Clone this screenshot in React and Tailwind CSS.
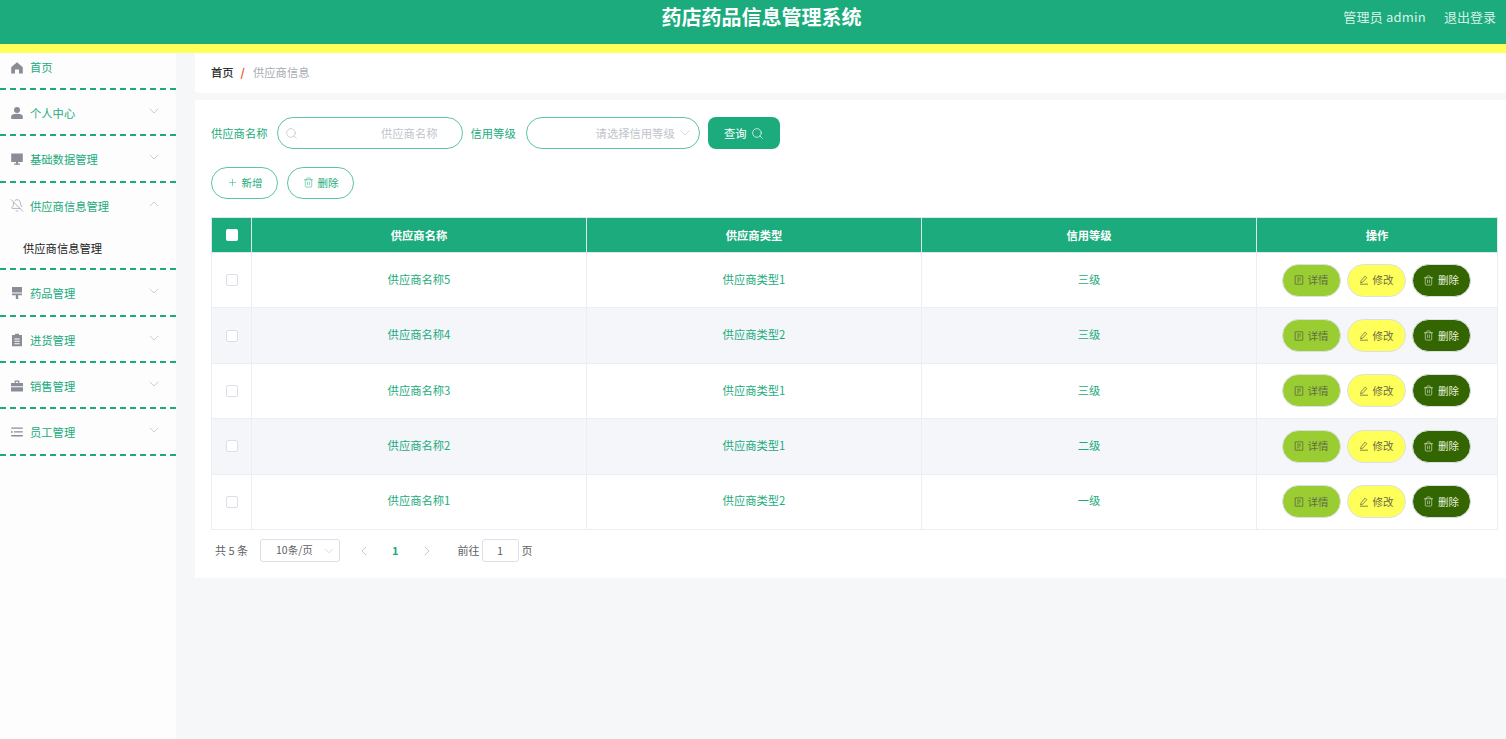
import { ChevronDown, ChevronUp, ChevronLeft, ChevronRight, Search, Plus, Trash2, BellOff } from 'lucide-react';

function HomeIcon() {
    return (
        <svg viewBox="0 0 14 14" className="w-[14px] h-[14px] fill-[#8b8d96]">
            <path d="M7 1.2 1.2 6.2V12.6H5V8.6H9V12.6H12.8V6.2Z" />
        </svg>
    );
}

function UserIcon() {
    return (
        <svg viewBox="0 0 14 14" className="w-[14px] h-[14px] fill-[#8b8d96]">
            <circle cx="7" cy="4" r="3" />
            <path d="M1.2 13V10.6C1.2 8.8 3 7.8 7 7.8S12.8 8.8 12.8 10.6V13Z" />
        </svg>
    );
}

function MonitorIcon() {
    return (
        <svg viewBox="0 0 14 14" className="w-[14px] h-[14px] fill-[#8b8d96]">
            <path d="M1.2 1.6H12.8V10H8V11.6H10V12.8H4V11.6H6V10H1.2Z" />
        </svg>
    );
}

function BrushIcon() {
    return (
        <svg viewBox="0 0 14 14" className="w-[14px] h-[14px] fill-[#8b8d96]">
            <path d="M2 1H12V6.6H2ZM2 7.4H12V9.2H8.2V13H5.8V9.2H2Z" />
        </svg>
    );
}

function ClipboardIcon() {
    return (
        <svg viewBox="0 0 14 14" className="w-[14px] h-[14px] fill-[#8b8d96]">
            <path fillRule="evenodd" d="M5 .8H9V2H12V13.2H2V2H5ZM4.4 5.4V6.4H9.6V5.4ZM4.4 7.8V8.8H9.6V7.8ZM4.4 10.2V11.2H9.6V10.2Z" />
        </svg>
    );
}

function BagIcon() {
    return (
        <svg viewBox="0 0 14 14" className="w-[14px] h-[14px] fill-[#8b8d96]">
            <path fillRule="evenodd" d="M4.6 1.6H9.4V4H13V7.2H1V4H4.6ZM5.8 2.7V4H8.2V2.7ZM1 8.2H13V12.6H1Z" />
        </svg>
    );
}

function ListIcon() {
    return (
        <svg viewBox="0 0 14 14" className="w-[14px] h-[14px] fill-[#8b8d96]">
            <path d="M1.2 2.4H12.8V3.8H1.2ZM4 6.2H12.8V7.6H4ZM1.2 10H12.8V11.4H1.2ZM1.2 5.6 3.2 6.9 1.2 8.2Z" />
        </svg>
    );
}

function TicketsIcon() {
    return (
        <svg viewBox="0 0 10 10" className="w-[10px] h-[10px] fill-none stroke-current stroke-[0.8]">
            <path d="M1.2.8H8.8V9.2H1.2ZM3.2 3.2H6.8M3.2 5H6.8M3.2 6.8H5.2" />
        </svg>
    );
}

function EditIcon() {
    return (
        <svg viewBox="0 0 10 10" className="w-[10px] h-[10px] fill-none stroke-current stroke-[0.8]">
            <path d="M6.2 1 7.8 2.6 3.6 7.2 1.6 7.8 2.2 5.6ZM1 9.2H9" />
        </svg>
    );
}

const menus = [
    { name: '首页', icon: <HomeIcon />, first: true },
    { name: '个人中心', icon: <UserIcon />, arrow: true },
    { name: '基础数据管理', icon: <MonitorIcon />, arrow: true },
    { name: '供应商信息管理', icon: <BellOff size={15} strokeWidth={1.1} className="text-[#8b8d96]" />, arrow: true, open: true, sub: '供应商信息管理' },
    { name: '药品管理', icon: <BrushIcon />, arrow: true },
    { name: '进货管理', icon: <ClipboardIcon />, arrow: true },
    { name: '销售管理', icon: <BagIcon />, arrow: true },
    { name: '员工管理', icon: <ListIcon />, arrow: true },
];

const rows = [
    { name: '供应商名称5', type: '供应商类型1', level: '三级' },
    { name: '供应商名称4', type: '供应商类型2', level: '三级' },
    { name: '供应商名称3', type: '供应商类型1', level: '三级' },
    { name: '供应商名称2', type: '供应商类型1', level: '二级' },
    { name: '供应商名称1', type: '供应商类型2', level: '一级' },
];

function Sidebar() {
    return (
        <aside className="w-[176px] shrink-0 bg-[#fdfdfe]">
            {menus.map((menu) => (
                <div key={menu.name} className="border-b-2 border-dashed border-[#1bab7c]">
                    <div className={`flex items-start pl-[10px] pr-[14px] ${menu.first ? 'h-[35px] pt-[5px]' : 'h-[44.4px] pt-[14px]'}`}>
                        <span className={`w-[14px] h-[14px] flex items-center justify-center ${menu.first ? 'mt-[3px]' : 'mt-[2px]'}`}>{menu.icon}</span>
                        <span className="ml-[6px] text-[11.3px] leading-[18px] text-[#1bab7c]">{menu.name}</span>
                        {menu.arrow && (
                            <span className="ml-auto -mt-[1px] text-[#b4b6bc]">
                                {menu.open ? <ChevronUp size={16} strokeWidth={1} /> : <ChevronDown size={16} strokeWidth={1} />}
                            </span>
                        )}
                    </div>
                    {menu.sub && (
                        <div className="h-[41px] pl-[23px] pt-[12px] text-[11.3px] leading-[18px] text-[#222222]">{menu.sub}</div>
                    )}
                </div>
            ))}
        </aside>
    );
}

function ActionButton({ className, icon, label }) {
    return (
        <button className={`w-[59px] h-[33px] flex items-center justify-center gap-[4px] rounded-full border border-[#dcdfe6] text-[10.5px] ${className}`}>
            {icon}
            {label}
        </button>
    );
}

export default function App() {
    return (
        <div className="h-[739px] overflow-hidden flex flex-col bg-[#f6f7f9] font-['Noto_Sans_CJK_SC','Noto_Sans',sans-serif]">
            <header className="h-[53px] shrink-0 bg-[#1bab7c] border-b-[9px] border-[#ffff5a] flex items-start relative">
                <h1 className="flex-1 text-center text-[20px] leading-[34px] font-bold text-white pl-[17px]">药店药品信息管理系统</h1>
                <div className="absolute right-[10px] top-[8px] flex gap-[18px] text-[13px] leading-[18px] text-[#d8f2e8]">
                    <span className="tracking-[0.2px]">管理员 admin</span>
                    <span>退出登录</span>
                </div>
            </header>

            <div className="flex flex-1 min-h-0">
                <Sidebar />

                <main className="flex-1 pl-[19px]">
                    <div className="h-[40px] bg-white rounded-b-[4px] flex items-center pl-[16px] pb-[1px] text-[11.3px] text-[#303133]">
                        <span className="font-medium">首页</span>
                        <span className="ml-[7px] mr-[8px] text-[#f0501e] font-bold">/</span>
                        <span className="text-[#a8abb2]">供应商信息</span>
                    </div>

                    <section className="mt-[7px] h-[478px] bg-white pt-[17px] pl-[16px] pr-[9px]">
                        <div className="flex items-center h-[32px] text-[11.3px]">
                            <label className="text-[#1bab7c]">供应商名称</label>
                            <div className="ml-[9px] w-[186px] h-[32px] rounded-full border border-[#1bab7c]/70 flex items-center pl-[7px] pr-[24px]">
                                <Search size={13} strokeWidth={1.1} className="text-[#b4b6bc]" />
                                <span className="ml-auto text-[#c0c4cc]">供应商名称</span>
                            </div>
                            <label className="ml-[8px] text-[#1bab7c]">信用等级</label>
                            <div className="ml-[10px] w-[174px] h-[32px] rounded-full border border-[#1bab7c]/70 flex items-center pr-[6px]">
                                <span className="ml-auto text-[#c0c4cc]">请选择信用等级</span>
                                <ChevronDown size={16} strokeWidth={1} className="ml-[2px] text-[#c0c4cc]" />
                            </div>
                            <button className="ml-[8px] w-[72px] h-[32px] rounded-[8px] bg-[#1bab7c] text-white flex items-center justify-center gap-[4px]">
                                查询
                                <Search size={13} strokeWidth={1.3} />
                            </button>
                        </div>

                        <div className="flex gap-[9px] mt-[18px]">
                            <button className="w-[67px] h-[32px] pb-[1px] rounded-full border border-[#1bab7c]/70 text-[10.5px] text-[#1bab7c] flex items-center justify-center gap-[4px]">
                                <Plus size={11} strokeWidth={1.1} />
                                新增
                            </button>
                            <button className="w-[67px] h-[32px] pb-[1px] rounded-full border border-[#1bab7c]/70 text-[10.5px] text-[#1bab7c] flex items-center justify-center gap-[4px]">
                                <Trash2 size={11} strokeWidth={1.1} />
                                删除
                            </button>
                        </div>

                        <table className="mt-[18px] w-[1286px] table-fixed border-collapse text-[11.3px]">
                            <colgroup>
                                <col className="w-[40px]" />
                                <col className="w-[335px]" />
                                <col className="w-[335px]" />
                                <col className="w-[335px]" />
                                <col className="w-[241px]" />
                            </colgroup>
                            <thead>
                                <tr className="h-[35px] bg-[#1bab7c] text-white">
                                    <th className="border border-[#dfe6ec] font-bold">
                                        <span className="block mx-auto w-[12px] h-[12px] bg-white rounded-[2px]" />
                                    </th>
                                    <th className="border border-[#dfe6ec] font-bold">供应商名称</th>
                                    <th className="border border-[#dfe6ec] font-bold">供应商类型</th>
                                    <th className="border border-[#dfe6ec] font-bold">信用等级</th>
                                    <th className="border border-[#dfe6ec] font-bold">操作</th>
                                </tr>
                            </thead>
                            <tbody>
                                {rows.map((row, index) => (
                                    <tr key={row.name} className={`h-[55.4px] text-center text-[#1bab7c] ${index % 2 === 1 ? 'bg-[#f4f6fa]' : 'bg-white'}`}>
                                        <td className="border border-[#ebeef5]">
                                            <span className="block mx-auto w-[12px] h-[12px] bg-white border border-[#dcdfe6] rounded-[2px]" />
                                        </td>
                                        <td className="border border-[#ebeef5] pb-[2px]">{row.name}</td>
                                        <td className="border border-[#ebeef5] pb-[2px]">{row.type}</td>
                                        <td className="border border-[#ebeef5] pb-[2px]">{row.level}</td>
                                        <td className="border border-[#ebeef5]">
                                            <div className="flex justify-center gap-[6px] pr-[2px]">
                                                <ActionButton className="bg-[#9acd32] text-[#5f6b4a]" icon={<TicketsIcon />} label="详情" />
                                                <ActionButton className="bg-[#ffff5a] text-[#6b6b45]" icon={<EditIcon />} label="修改" />
                                                <ActionButton className="bg-[#336600] text-[#e8f0dc]" icon={<Trash2 size={11} strokeWidth={1.3} />} label="删除" />
                                            </div>
                                        </td>
                                    </tr>
                                ))}
                            </tbody>
                        </table>

                        <div className="flex items-center mt-[9px] pl-[4px] h-[24px] text-[11px] text-[#606266]">
                            <span className="pb-[2px]">共 5 条</span>
                            <div className="ml-[12px] w-[80px] h-[23px] border border-[#dcdfe6] rounded-[3px] flex items-center justify-between pl-[15px] pr-[3px]">
                                <span className="pb-[2px] text-[10.5px]">10条/页</span>
                                <ChevronDown size={14} strokeWidth={1} className="text-[#c0c4cc]" />
                            </div>
                            <ChevronLeft size={16} strokeWidth={1} className="ml-[16px] text-[#a8abb2]" />
                            <span className="ml-[20px] pb-[2px] font-bold text-[#1bab7c]">1</span>
                            <ChevronRight size={16} strokeWidth={1} className="ml-[20px] text-[#a8abb2]" />
                            <span className="ml-[23px] pb-[2px]">前往</span>
                            <div className="ml-[2px] w-[37px] h-[23px] pb-[2px] border border-[#dcdfe6] rounded-[3px] flex items-center justify-center">1</div>
                            <span className="ml-[3px] pb-[2px]">页</span>
                        </div>
                    </section>
                </main>
            </div>
        </div>
    );
}
